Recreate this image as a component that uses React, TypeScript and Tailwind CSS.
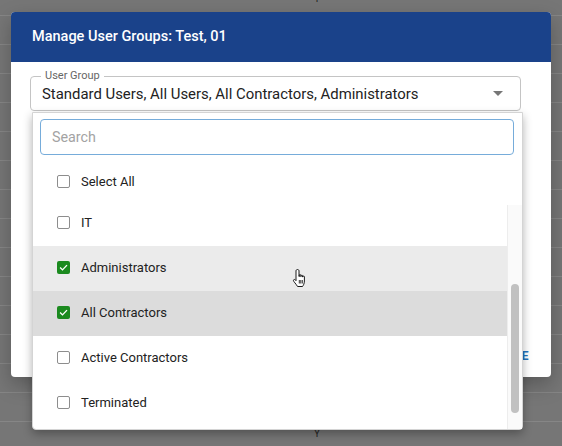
import React from "react";

const Checkbox = ({ checked }: { checked: boolean }) =>
  checked ? (
    <span className="flex h-[13px] w-[13px] shrink-0 items-center justify-center rounded-[2px] bg-[#1b8a1f]">
      <svg viewBox="0 0 12 12" className="h-[11px] w-[11px]">
        <path d="M2.3 6.1 L4.9 8.6 L9.8 3.4" fill="none" stroke="white" strokeWidth="1.5" />
      </svg>
    </span>
  ) : (
    <span className="h-[13px] w-[13px] shrink-0 rounded-[2px] border-[1.5px] border-[#8d8d8d] bg-white" />
  );

const Row = ({ label, checked, bg }: { label: string; checked: boolean; bg: string }) => (
  <div className={`flex h-[45px] shrink-0 items-center gap-[11px] pb-[2px] pl-[24px] text-[13px] text-[#222] ${bg}`}>
    <Checkbox checked={checked} />
    <span>{label}</span>
  </div>
);

export default function App() {
  return (
    <div
      className="relative h-[446px] w-[562px] overflow-hidden bg-[#767676]"
      style={{ fontFamily: "Roboto, 'Noto Sans', sans-serif" }}
    >
      {/* dimmed page behind */}
      <div className="flex flex-col pt-[15px]">
        {Array.from({ length: 15 }).map((_, i) => (
          <div key={i} className="h-[29px] shrink-0 border-t border-[#868686]" />
        ))}
      </div>
      <span className="absolute left-[314px] top-[-6px] text-[10px] leading-none text-[#222]">Y</span>
      <span className="absolute left-[314px] top-[429px] text-[10px] leading-none text-[#222]">Y</span>

      {/* dialog */}
      <div className="absolute left-[11px] top-[12px] flex h-[365px] w-[540px] flex-col overflow-hidden rounded-[4px] bg-white shadow-[0_8px_20px_rgba(0,0,0,0.25)]">
        <div className="flex h-[50px] shrink-0 items-center bg-[#1a428a] pl-[21px] text-[14.5px] font-medium text-white">
          Manage User Groups: Test, 01
        </div>
        <div className="pl-[19px] pt-[14px]">
          <div className="relative flex h-[35px] w-[491px] items-center rounded-[4px] border border-[#c4c4c4] pl-[11px] pr-[17px]">
            <span className="absolute left-[10px] top-[-7px] bg-white px-[4px] text-[11px] leading-[12px] text-[#666]">
              User Group
            </span>
            <span className="flex-1 pt-[2px] text-[14.9px] text-[#222]">
              Standard Users, All Users, All Contractors, Administrators
            </span>
            <svg viewBox="0 0 10 5" className="h-[5px] w-[10px]">
              <path d="M0 0 L10 0 L5 5 Z" fill="#767676" />
            </svg>
          </div>
        </div>
        <div className="mt-auto flex h-[42px] shrink-0 items-center justify-end gap-[24px] pr-[22px] text-[12px] font-bold tracking-[0.5px] text-[#2372bd]">
          <span>CANCEL</span>
          <span>SAVE</span>
        </div>
      </div>

      {/* dropdown menu */}
      <div className="absolute left-[32px] top-[112px] flex h-[318px] w-[491px] flex-col rounded-b-[4px] border border-[#d4d4d4] bg-white shadow-[0_4px_10px_rgba(0,0,0,0.3)]">
        <div className="pl-[7px] pr-[8px] pt-[6px]">
          <div className="flex h-[36px] items-center rounded-[4px] border-[1.5px] border-[#76acda] pl-[11px] pt-[2px] text-[14.3px] text-[#a3a3a3]">
            Search
          </div>
        </div>
        <div className="pt-[5px]">
          <Row label="Select All" checked={false} bg="" />
        </div>
        <div className="flex h-[224px] shrink-0">
          <div className="flex-1 overflow-hidden">
            <div className="-mt-[4px] flex flex-col">
              <Row label="IT" checked={false} bg="" />
              <Row label="Administrators" checked={true} bg="bg-[#ebebeb]" />
              <Row label="All Contractors" checked={true} bg="bg-[#dcdcdc]" />
              <Row label="Active Contractors" checked={false} bg="" />
              <Row label="Terminated" checked={false} bg="" />
            </div>
          </div>
          <div className="flex w-[15px] shrink-0 flex-col border-l border-[#ededed] bg-[#fafafa] pl-[3px] pt-[79px]">
            <div className="h-[129px] w-[8px] rounded-full bg-[#c1c1c1]" />
          </div>
        </div>
      </div>

      {/* mouse cursor */}
      <svg viewBox="0 0 16 20" className="absolute left-[292px] top-[268px] h-[20px] w-[16px]">
        <path
          d="M5.5 1.5 C6.4 1.5 7 2.1 7 3 L7 8.5 L7.3 8.5 L7.3 7.2 C7.3 6.4 8.8 6.4 8.8 7.2 L8.8 8.6 L9.1 8.6 L9.1 7.8 C9.1 7 10.6 7 10.6 7.8 L10.6 9 L10.9 9 L10.9 8.6 C10.9 7.9 12.4 7.9 12.4 8.6 L12.4 13 C12.4 15.5 11.3 17.5 10.5 18.5 L5.6 18.5 C4.8 17.3 3.6 15.6 2.4 14.2 C1.5 13.1 1.2 12.3 1.7 11.8 C2.3 11.2 3.2 11.6 4 12.6 L4 3 C4 2.1 4.6 1.5 5.5 1.5 Z"
          fill="white"
          stroke="black"
          strokeWidth="0.9"
          strokeLinejoin="round"
        />
        <path d="M7.3 12 L7.3 15.5 M8.8 12 L8.8 15.5 M10.3 12 L10.3 15.5" stroke="black" strokeWidth="0.8" />
      </svg>
    </div>
  );
}
